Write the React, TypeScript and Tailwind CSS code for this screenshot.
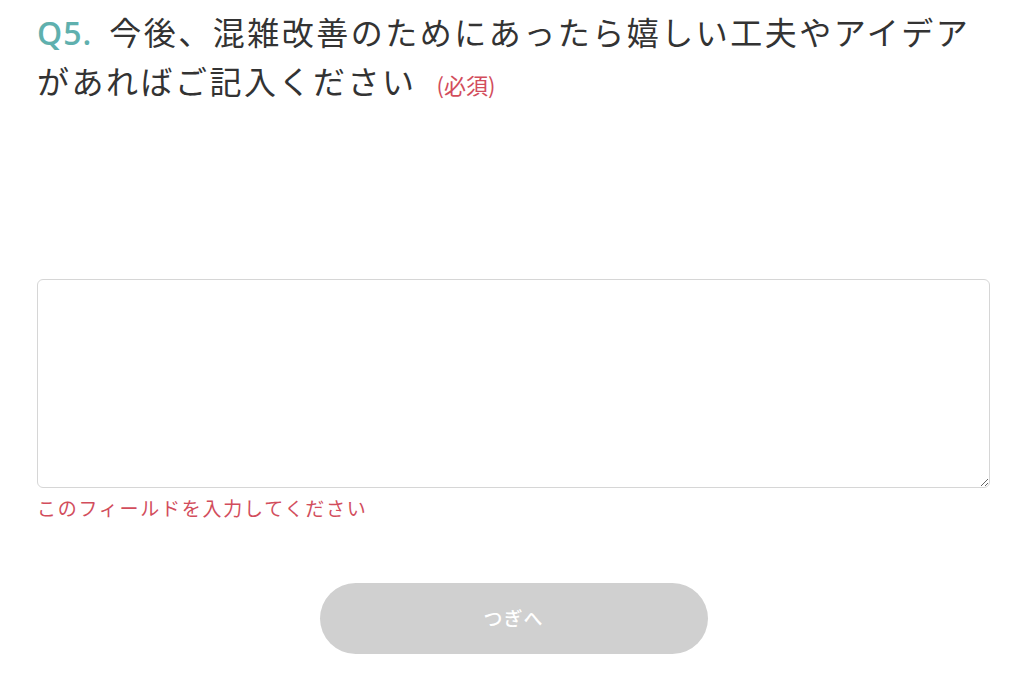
const jp = "font-['Noto_Sans_CJK_JP','Noto_Sans',sans-serif]";

export default function App() {
  return (
    <div className={`min-h-screen bg-white ${jp}`}>
      <div className="pl-[37px] pr-[34px] pt-[7px]">
        {/* Question title */}
        <h2 className="text-[32px] leading-[49px] tracking-[2.5px] text-[#333333] font-normal">
          <span className="text-[#5fb0ae] font-semibold font-['Open_Sans',sans-serif] tracking-[1px] mr-[17px] leading-none">Q5.</span>
          今後、混雑改善のためにあったら嬉しい工夫やアイデア
          <br />
          があればご記入ください
          <span className="ml-[20px] text-[22px] tracking-normal text-[#d24d5c] leading-none">(必須)</span>
        </h2>

        {/* Answer field */}
        <div className="mt-[174px]">
          <textarea className="block w-full h-[209px] rounded-[6px] border border-[#d6d6d6] bg-white resize-y outline-none" />
          <p className="mt-[9px] text-[19px] leading-[22px] tracking-[1.75px] text-[#d24d5c]">
            このフィールドを入力してください
          </p>
        </div>

        {/* Next button */}
        <div className="mt-[64px] flex justify-center">
          <button className="w-[388px] h-[71px] rounded-full bg-[#d0d0d0] text-white text-[19px] font-medium tracking-[1px]">
            つぎへ
          </button>
        </div>
      </div>
    </div>
  );
}
